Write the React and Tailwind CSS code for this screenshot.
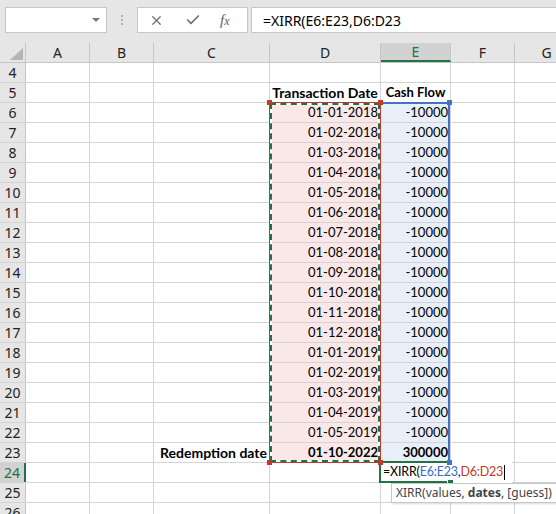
import { X, Check } from "lucide-react";

const COLS = [
  { id: "A", w: "w-[64px]" },
  { id: "B", w: "w-[64px]" },
  { id: "C", w: "w-[116px]" },
  { id: "D", w: "w-[111px]" },
  { id: "E", w: "w-[70px]" },
  { id: "F", w: "w-[64px]" },
  { id: "G", w: "w-[64px]" },
];

const ROWS = Array.from({ length: 23 }, (_, i) => i + 4);

const dates = [
  "01-01-2018", "01-02-2018", "01-03-2018", "01-04-2018", "01-05-2018", "01-06-2018",
  "01-07-2018", "01-08-2018", "01-09-2018", "01-10-2018", "01-11-2018", "01-12-2018",
  "01-01-2019", "01-02-2019", "01-03-2019", "01-04-2019", "01-05-2019",
];

// cell contents keyed by address
const cells = {
  D5: { text: "Transaction Date", bold: true, align: "center", size: "text-[14px]" },
  E5: { text: "Cash Flow", bold: true, align: "center" },
  C23: { text: "Redemption date", bold: true, size: "text-[14px]" },
  D23: { text: "01-10-2022", bold: true },
  E23: { text: "300000", bold: true },
};
dates.forEach((d, i) => {
  cells["D" + (i + 6)] = { text: d };
  cells["E" + (i + 6)] = { text: "-10000" };
});

function fillFor(col, row) {
  if (row >= 6 && row <= 23 && col === "D") return "bg-[#fae8e8]";
  if (row >= 6 && row <= 23 && col === "E") return "bg-[#e9eff8]";
  return "bg-white";
}

function Cell({ col, row }) {
  const c = cells[col.id + row];
  return (
    <div
      className={`${col.w} ${fillFor(col.id, row)} shrink-0 h-full border-r border-[#d4d4d4] px-[2px] flex items-center whitespace-nowrap ${
        c && c.align === "center" ? "justify-center" : "justify-end"
      }`}
    >
      {c && (
        <span
          className={`font-['Lato',sans-serif] text-black ${c.size || "text-[13px]"} ${c.bold ? "font-bold" : ""}`}
        >
          {c.text}
        </span>
      )}
    </div>
  );
}

function FormulaBar() {
  return (
    <div className="h-[43px] bg-[#e6e6e6] flex items-start pt-[7px] pl-[5px]">
      {/* Name box */}
      <div className="w-[102px] h-[26px] bg-white border border-[#c6c6c6] flex items-center justify-end pr-[6px]">
        <svg width="8" height="4" viewBox="0 0 8 4">
          <polygon points="0,0 8,0 4,4" fill="#7a7a7a" />
        </svg>
      </div>
      <div className="w-[30px] h-[26px] flex flex-col items-center justify-center gap-[2px]">
        <span className="w-[2px] h-[2px] bg-[#b3b3b3]" />
        <span className="w-[2px] h-[2px] bg-[#b3b3b3]" />
        <span className="w-[2px] h-[2px] bg-[#b3b3b3]" />
      </div>
      {/* Cancel / enter / fx */}
      <div className="w-[111px] h-[26px] bg-white border border-[#c6c6c6] flex items-center">
        <X size={15} strokeWidth={2} className="text-[#707070] ml-[11px]" />
        <Check size={16} strokeWidth={2.5} className="text-[#707070] ml-[21px]" />
        <span className="ml-[19px] font-['Liberation_Serif',serif] italic text-[15px] text-[#606060] leading-none">
          f<span className="text-[12px]">x</span>
        </span>
      </div>
      <div className="ml-[3px] flex-1 h-[26px] bg-white border border-[#c6c6c6] border-r-0 flex items-center pl-[11px]">
        <span className="font-['Noto_Sans',sans-serif] text-[14px] text-black">=XIRR(E6:E23,D6:D23</span>
      </div>
    </div>
  );
}

function HeaderRow() {
  return (
    <div className="flex h-[20px] bg-[#e6e6e6] border-b border-[#c6c6c6]">
      <div className="w-[26px] shrink-0 h-full border-r border-[#c6c6c6] flex items-end justify-end p-[2px]">
        <svg width="13" height="12" viewBox="0 0 13 12">
          <polygon points="13,0 13,12 0,12" fill="#b5b5b5" />
        </svg>
      </div>
      {COLS.map((c) => {
        const sel = c.id === "E";
        return (
          <div
            key={c.id}
            className={`${c.w} shrink-0 h-full border-r border-[#c6c6c6] flex items-center justify-center font-['Noto_Sans',sans-serif] text-[14px] ${
              sel ? "bg-[#d2d2d2] text-[#217346] border-b-2 border-b-[#217346]" : "text-[#222]"
            }`}
          >
            {c.id}
          </div>
        );
      })}
    </div>
  );
}

function SheetRow({ row }) {
  const sel = row === 24;
  return (
    <div className="flex h-[20px] border-b border-[#d4d4d4]">
      <div
        className={`w-[26px] shrink-0 h-full flex items-center justify-center font-['Noto_Sans',sans-serif] text-[14px] ${
          sel
            ? "bg-[#d2d2d2] text-[#217346] border-r-2 border-r-[#217346]"
            : "bg-[#e6e6e6] text-[#222] border-r border-[#c6c6c6]"
        }`}
      >
        {row}
      </div>
      {COLS.map((c) => (
        <Cell key={c.id} col={c} row={row} />
      ))}
    </div>
  );
}

export default function App() {
  return (
    <div className="relative w-[556px] h-[514px] overflow-hidden bg-white select-none">
      <FormulaBar />
      <HeaderRow />
      {ROWS.map((r) => (
        <SheetRow key={r} row={r} />
      ))}

      {/* E6:E23 reference border */}
      <div className="absolute left-[380px] top-[102px] w-[70px] h-[361px] border-t-2 border-r-2 border-b-2 border-[#4472c4]" />
      {/* D6:D23 reference border */}
      <div className="absolute left-[269px] top-[102px] w-[112px] h-[361px] border border-[#c0392b]" />
      {/* copy marquee */}
      <div className="absolute left-[270px] top-[103px] w-[110px] h-[359px] border-2 border-white" />
      <div className="absolute left-[270px] top-[103px] w-[110px] h-[359px] border-2 border-dashed border-[#217346]" />

      {/* reference handles */}
      <div className="absolute left-[267px] top-[100px] w-[5px] h-[5px] bg-[#c0392b]" />
      <div className="absolute left-[378px] top-[100px] w-[5px] h-[5px] bg-[#c0392b]" />
      <div className="absolute left-[447px] top-[100px] w-[5px] h-[5px] bg-[#4472c4]" />

      {/* active cell editor E24 */}
      <div className="absolute left-[379px] top-[461px] w-[133px] h-[22px] bg-white flex items-center">
        <div className="absolute left-0 top-0 w-[73px] h-[22px] border-l-2 border-t-2 border-b-2 border-[#217346]" />
        <span className="relative ml-[4px] font-['Lato',sans-serif] text-[12.5px] tracking-[-0.2px] text-black whitespace-nowrap">
          =XIRR(<span className="text-[#3b6bc4]">E6:E23</span>,<span className="text-[#c0392b]">D6:D23</span>
        </span>
        <span className="relative ml-[1px] w-[1px] h-[15px] bg-black" />
      </div>
      <div className="absolute left-[267px] top-[460px] w-[5px] h-[5px] bg-[#c0392b]" />
      <div className="absolute left-[378px] top-[460px] w-[5px] h-[5px] bg-[#c0392b]" />
      <div className="absolute left-[447px] top-[460px] w-[5px] h-[5px] bg-[#4472c4]" />
      <div className="absolute left-[448px] top-[480px] w-[5px] h-[5px] bg-[#217346] outline outline-1 outline-white" />

      {/* function tooltip */}
      <div className="absolute left-[391px] top-[483px] h-[20px] bg-white border border-[#c8c8c8] shadow-[1px_1px_2px_rgba(0,0,0,0.15)] flex items-center pl-[4px] pr-[6px] font-['Noto_Sans',sans-serif] text-[12px] text-[#444] whitespace-nowrap">
        <span>
          XIRR(values, <b className="font-bold">dates</b>, [guess])
        </span>
      </div>
    </div>
  );
}
